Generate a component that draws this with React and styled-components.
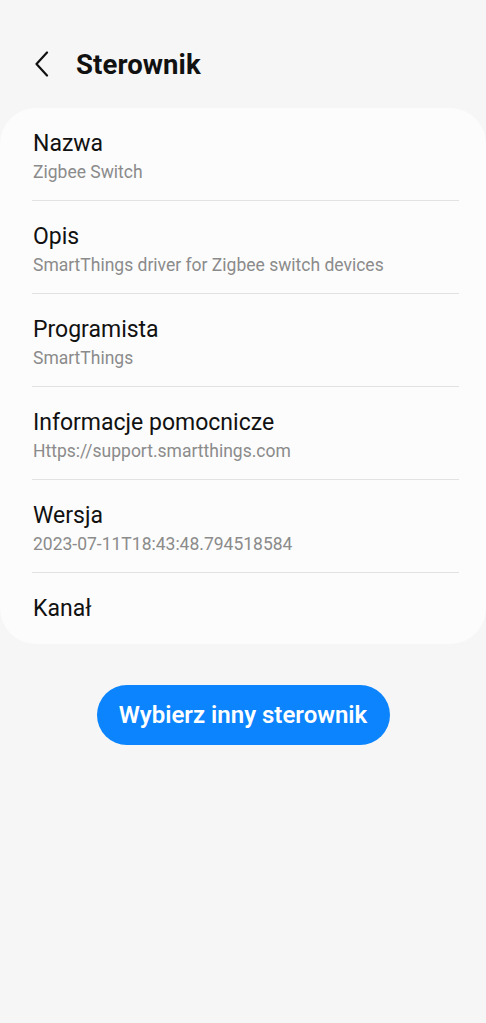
import React from "react";
import styled, { createGlobalStyle } from "styled-components";

const Global = createGlobalStyle`
  html, body { margin: 0; padding: 0; background: #f6f6f6; }
  body { font-family: Roboto, "Noto Sans", sans-serif; -webkit-font-smoothing: antialiased; }
`;

const Page = styled.div`
  width: 486px;
  min-height: 1023px;
  background: #f6f6f6;
  display: flex;
  flex-direction: column;
`;

const Header = styled.header`
  height: 108px;
  display: flex;
  align-items: center;
  padding: 20px 0 0 29px;
  box-sizing: border-box;
  gap: 21px;
`;

const BackButton = styled.button`
  width: 26px;
  height: 30px;
  border: 0;
  background: none;
  padding: 0;
  display: flex;
  align-items: center;
  justify-content: center;
`;

const Title = styled.h1`
  margin: 0;
  font-size: 27.5px;
  font-weight: 700;
  color: #111;
  letter-spacing: 0.1px;
`;

const Card = styled.section`
  background: #fcfcfc;
  border-radius: 36px;
  padding: 0 27px 0 32px;
  display: flex;
  flex-direction: column;
`;

const Row = styled.div`
  padding: 22px 0 ${(p) => (p.$last ? 21 : 17)}px 1px;
  border-bottom: ${(p) => (p.$last ? "none" : "1px solid #e2e2e2")};
  display: flex;
  flex-direction: column;
  gap: 3px;
`;

const Label = styled.div`
  font-size: 23px;
  line-height: 28px;
  color: #111;
`;

const Value = styled.div`
  font-size: 17.5px;
  line-height: 22px;
  color: #8b8b8b;
`;

const Actions = styled.div`
  display: flex;
  justify-content: center;
  padding-top: 41px;
`;

const PrimaryButton = styled.button`
  height: 60px;
  width: 293px;
  border: 0;
  border-radius: 30px;
  background: #0b84fd;
  color: #fff;
  font-family: Roboto, "Noto Sans", sans-serif;
  font-size: 24px;
  font-weight: 600;
  padding: 0;
`;

const items = [
  ["Nazwa", "Zigbee Switch"],
  ["Opis", "SmartThings driver for Zigbee switch devices"],
  ["Programista", "SmartThings"],
  ["Informacje pomocnicze", "Https://support.smartthings.com"],
  ["Wersja", "2023-07-11T18:43:48.794518584"],
  ["Kanał", null],
];

export default function App() {
  return (
    <Page>
      <Global />
      <Header>
        <BackButton aria-label="Wstecz">
          <svg width="16" height="26" viewBox="0 0 16 26" fill="none">
            <path d="M13 1.5 L2.5 13 L13 24.5" stroke="#111" strokeWidth="2.2" strokeLinecap="round" strokeLinejoin="round" />
          </svg>
        </BackButton>
        <Title>Sterownik</Title>
      </Header>
      <Card>
        {items.map(([label, value], i) => (
          <Row key={label} $last={i === items.length - 1}>
            <Label>{label}</Label>
            {value && <Value>{value}</Value>}
          </Row>
        ))}
      </Card>
      <Actions>
        <PrimaryButton>Wybierz inny sterownik</PrimaryButton>
      </Actions>
    </Page>
  );
}
